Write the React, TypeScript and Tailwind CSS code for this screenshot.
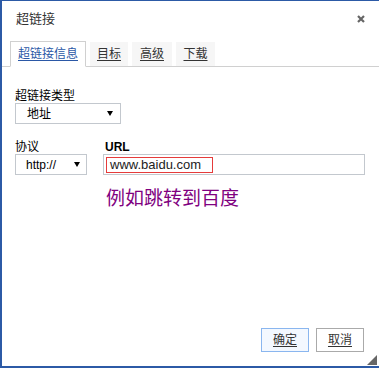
import React from 'react';

const font = "font-['Liberation_Sans','Noto_Sans_CJK_SC',sans-serif]";

function Arrow() {
  return (
    <svg width="6" height="5" viewBox="0 0 6 5" className="shrink-0">
      <path d="M0 0 L6 0 L3 5 Z" fill="#000" />
    </svg>
  );
}

const tabs = ['目标', '高级', '下载'];

export default function App() {
  return (
    <div
      className={`${font} relative w-[379px] h-[368px] bg-white border-t border-l-2 border-b-2 border-[#2c5aa6] flex flex-col text-[12px] text-[#222]`}
    >
      {/* header */}
      <div className="h-[40px] pt-[10px] pl-[14px] pr-[14px] flex items-start justify-between">
        <span className="text-[13px] leading-[16px] text-[#333]">超链接</span>
        <svg width="8" height="8" viewBox="0 0 8 8" className="mt-[4px]">
          <path d="M1 1 L7 7 M7 1 L1 7" stroke="#666" strokeWidth="2.2" />
        </svg>
      </div>

      {/* tabs */}
      <div className="h-[26px] pl-[8px] flex items-end gap-[4px] border-b border-[#d0d0d0]">
        <div className="w-[76px] h-[26px] -mb-px border border-[#d0d0d0] border-b-white bg-white flex items-center justify-center">
          <span className="leading-[14px] text-[#2b58a6] underline underline-offset-[2px]">超链接信息</span>
        </div>
        {tabs.map((t, i) => (
          <div
            key={t}
            className={`${i === 2 ? 'w-[39px]' : i === 1 ? 'w-[40px]' : 'w-[38px]'} h-[24px] bg-[#f6f6f6] flex items-center justify-center`}
          >
            <span className="leading-[14px] text-[#333] underline underline-offset-[2px]">{t}</span>
          </div>
        ))}
      </div>

      {/* body */}
      <div className="pl-[13px] pr-[14px] pt-[22px]">
        <div className="leading-[14px] text-black">超链接类型</div>
        <div className="w-[106px] h-[21px] border border-[#c3c8ce] flex items-center justify-between pl-[11px] pr-[7px]">
          <span className="leading-[14px] text-black">地址</span>
          <Arrow />
        </div>

        <div className="mt-[17px] flex gap-[16px]">
          <div className="w-[72px] shrink-0">
            <div className="h-[13px] leading-[13px] text-black">协议</div>
            <div className="w-[72px] h-[21px] border border-[#c3c8ce] flex items-center justify-between pl-[10px] pr-[6px]">
              <span className="text-[12px] leading-[14px] text-black">http://</span>
              <Arrow />
            </div>
          </div>
          <div className="flex-1">
            <div className="h-[13px] leading-[13px] font-bold text-black pl-[2px]">URL</div>
            <div className="h-[21px] border border-[#c3c8ce] flex items-center pl-[2px]">
              <div className="w-[107px] h-[16px] border border-[#e53b3b] flex items-center pl-[3px]">
                <span className="text-[13px] leading-[14px] text-[#222]">www.baidu.com</span>
              </div>
            </div>
            <div className="mt-[14px] ml-[3px] text-[19px] leading-[19px] text-[#800080]">例如跳转到百度</div>
          </div>
        </div>
      </div>

      {/* footer */}
      <div className="mt-auto pb-[14px] pr-[15px] flex justify-end gap-[7px]">
        <button className="w-[48px] h-[24px] border border-[#8ab6ef] bg-[#f3f8ff] flex items-center justify-center">
          <span className="leading-[14px] text-[#333] underline underline-offset-[2px]">确定</span>
        </button>
        <button className="w-[48px] h-[24px] border border-[#aaaaaa] bg-white flex items-center justify-center">
          <span className="leading-[14px] text-[#333] underline underline-offset-[2px]">取消</span>
        </button>
      </div>

      {/* resize grip */}
      <svg width="10" height="10" viewBox="0 0 10 10" className="absolute right-[2px] bottom-[1px]">
        <path d="M10 0 L10 10 L0 10 Z" fill="#666" />
      </svg>
    </div>
  );
}
